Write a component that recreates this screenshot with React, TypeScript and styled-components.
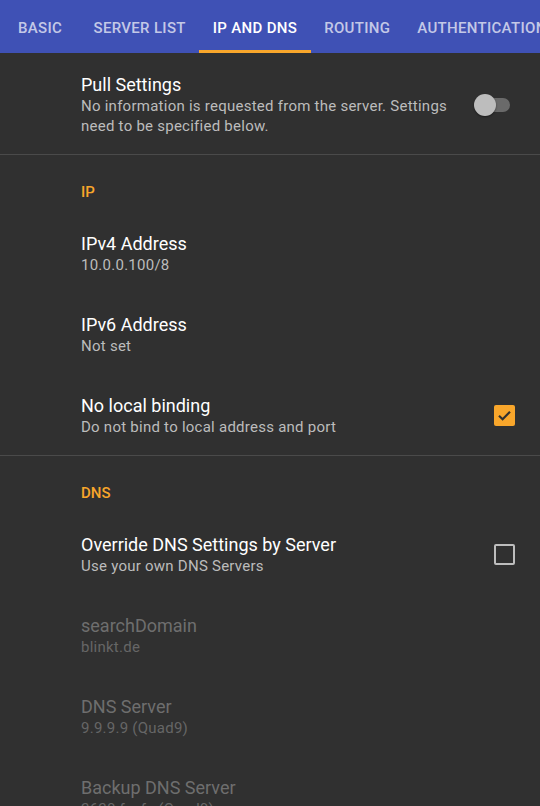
import React from "react";
import styled, { createGlobalStyle } from "styled-components";

const Global = createGlobalStyle`
  html, body { margin: 0; padding: 0; background: #303030; }
  body { font-family: Roboto, "Noto Sans", sans-serif; -webkit-font-smoothing: antialiased; }
  #root { width: 540px; height: 806px; overflow: hidden; background: #303030; }
`;

const ORANGE = "#f8a62b";

const Screen = styled.div`
  width: 540px;
  height: 806px;
  overflow: hidden;
  background: #303030;
  display: flex;
  flex-direction: column;
`;

const TabBar = styled.div`
  height: 53px;
  flex: 0 0 53px;
  background: #3f51b5;
  display: flex;
  align-items: stretch;
  overflow: hidden;
  white-space: nowrap;
`;

const Tab = styled.div<{ $active?: boolean }>`
  position: relative;
  min-width: 80px;
  box-sizing: border-box;
  padding: 3px 13.5px 0 13.5px;
  display: flex;
  align-items: center;
  justify-content: center;
  font-family: Roboto, sans-serif;
  font-weight: 500;
  font-size: 15px;
  letter-spacing: 0.32px;
  text-transform: uppercase;
  color: ${(p) => (p.$active ? "#ffffff" : "rgba(255,255,255,0.7)")};
  flex: 0 0 auto;
  &::after {
    content: "";
    display: ${(p) => (p.$active ? "block" : "none")};
    position: absolute;
    left: 0;
    right: 0;
    bottom: 0;
    height: 3px;
    background: ${ORANGE};
  }
`;

const List = styled.div`
  display: flex;
  flex-direction: column;
`;

const Row = styled.div`
  display: flex;
  align-items: center;
  padding: 20px 25px 18px 81px;
`;

const Texts = styled.div`
  flex: 1;
  min-width: 0;
  display: flex;
  flex-direction: column;
`;

const Title = styled.div<{ $disabled?: boolean }>`
  font-size: 18px;
  line-height: 23px;
  color: ${(p) => (p.$disabled ? "#6e6e6e" : "#ffffff")};
`;

const Summary = styled.div<{ $disabled?: boolean }>`
  font-size: 15px;
  line-height: 20px;
  letter-spacing: 0.25px;
  color: ${(p) => (p.$disabled ? "#666666" : "#bcbcbc")};
`;

const Divider = styled.div`
  height: 1px;
  background: #4a4a4a;
`;

const Category = styled.div`
  padding: 27px 24px 10px 81px;
  font-size: 15px;
  line-height: 20px;
  font-weight: 500;
  color: ${ORANGE};
`;

const Widget = styled.div`
  width: 48px;
  display: flex;
  justify-content: flex-end;
  align-items: center;
  flex: 0 0 48px;
  margin-left: 8px;
`;

const SwitchWrap = styled.div`
  position: relative;
  width: 36px;
  height: 22px;
  margin-right: 5px;
`;

const Track = styled.div`
  position: absolute;
  left: 2px;
  right: 0;
  top: 4px;
  height: 14px;
  border-radius: 7px;
  background: #6a6a6a;
`;

const Thumb = styled.div`
  position: absolute;
  left: 0;
  top: 0;
  width: 22px;
  height: 22px;
  border-radius: 50%;
  background: #bdbdbd;
  box-shadow: 0 1px 2px rgba(0, 0, 0, 0.45);
`;

const Box = styled.div<{ $checked?: boolean }>`
  width: 21px;
  height: 21px;
  box-sizing: border-box;
  border-radius: 2px;
  display: flex;
  align-items: center;
  justify-content: center;
  background: ${(p) => (p.$checked ? ORANGE : "transparent")};
  border: ${(p) => (p.$checked ? "none" : "2px solid #bdbdbd")};
`;

const Switch = () => (
  <SwitchWrap>
    <Track />
    <Thumb />
  </SwitchWrap>
);

const Checkbox = ({ checked }: { checked?: boolean }) => (
  <Box $checked={checked}>
    {checked && (
      <svg width="17" height="17" viewBox="0 0 17 17">
        <path d="M3 8.8 L6.6 12.2 L14 4.8" stroke="#303030" strokeWidth="2.2" fill="none" />
      </svg>
    )}
  </Box>
);

type PrefProps = {
  title: string;
  summary: string;
  disabled?: boolean;
  widget?: React.ReactNode;
};

const Pref = ({ title, summary, disabled, widget }: PrefProps) => (
  <Row>
    <Texts>
      <Title $disabled={disabled}>{title}</Title>
      <Summary $disabled={disabled}>{summary}</Summary>
    </Texts>
    {widget && <Widget>{widget}</Widget>}
  </Row>
);

export default function App() {
  return (
    <>
      <Global />
      <Screen>
        <TabBar>
          <Tab>Basic</Tab>
          <Tab>Server List</Tab>
          <Tab $active>IP and DNS</Tab>
          <Tab>Routing</Tab>
          <Tab>Authentication</Tab>
        </TabBar>
        <List>
          <Pref
            title="Pull Settings"
            summary="No information is requested from the server. Settings need to be specified below."
            widget={<Switch />}
          />
          <Divider />
          <Category>IP</Category>
          <Pref title="IPv4 Address" summary="10.0.0.100/8" />
          <Pref title="IPv6 Address" summary="Not set" />
          <Pref
            title="No local binding"
            summary="Do not bind to local address and port"
            widget={<Checkbox checked />}
          />
          <Divider />
          <Category>DNS</Category>
          <Pref
            title="Override DNS Settings by Server"
            summary="Use your own DNS Servers"
            widget={<Checkbox />}
          />
          <Pref title="searchDomain" summary="blinkt.de" disabled />
          <Pref title="DNS Server" summary="9.9.9.9 (Quad9)" disabled />
          <Pref title="Backup DNS Server" summary="2620:fe::fe (Quad9)" disabled />
        </List>
      </Screen>
    </>
  );
}
